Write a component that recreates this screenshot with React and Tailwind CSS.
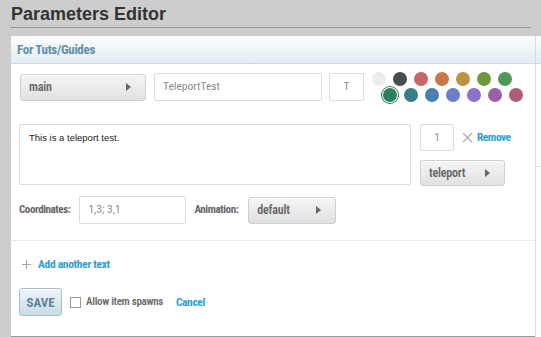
import React from 'react';

const COND = "font-['Roboto_Condensed','Open_Sans_Condensed',sans-serif]";

const ROW1 = ['bg-[#ececec]', 'bg-[#4a4d50]', 'bg-[#c6636b]', 'bg-[#c57a45]', 'bg-[#bf9242]', 'bg-[#6e983f]', 'bg-[#4e985a]'];
const ROW2 = ['bg-[#2f7d5f]', 'bg-[#3a7c88]', 'bg-[#4a80b0]', 'bg-[#6c7fc6]', 'bg-[#8a73c3]', 'bg-[#9a61a8]', 'bg-[#b05b79]'];

function Caret() {
  return (
    <svg width="5" height="8" viewBox="0 0 5 8" className="shrink-0">
      <path d="M0 0 L5 4 L0 8 Z" fill="#666" />
    </svg>
  );
}

function Select({ label, className }) {
  return (
    <div
      className={`flex items-center justify-between rounded-[3px] border border-[#d0d0d0] bg-gradient-to-b from-[#f5f5f5] to-[#e1e1e1] pl-[8px] pr-[14px] text-[12px] font-semibold tracking-[-0.2px] text-[#666] shadow-[inset_0_1px_0_#fff] ${COND} ${className}`}
    >
      <span>{label}</span>
      <Caret />
    </div>
  );
}

function Field({ value, className }) {
  return (
    <div className={`flex items-center rounded-[2px] border border-[#dcdcdc] bg-white text-[11.5px] text-[#8a8a8a] ${COND} ${className}`}>
      {value}
    </div>
  );
}

export default function App() {
  return (
    <div className="h-[337px] w-[541px] overflow-hidden bg-[#cdcdcd]">
      <div className="mx-[10px] h-[28px] border-b border-[#9b9b9b] pl-[1px] pt-[4px]">
        <h1 className="font-['Liberation_Sans',Arial,sans-serif] text-[18px] font-bold leading-[20px] text-[#333]">
          Parameters Editor
        </h1>
      </div>

      <div className="mt-[8px] flex h-[301px]">
        <div className="ml-[11px] flex w-[524px] flex-col border-b border-[#999] bg-white">
          <div className="flex h-[28px] items-center border-b border-[#cddbe4] bg-gradient-to-b from-[#fcfdfe] to-[#e2ecf2] pl-[6px]">
            <span className={`text-[13px] font-bold tracking-[-0.3px] text-[#5f8fa9] ${COND}`}>For Tuts/Guides</span>
          </div>

          <div className="flex flex-col pl-[8px] pt-[8px]">
            <div className="flex items-center">
              <Select label="main" className="ml-[1px] h-[27px] w-[126px]" />
              <Field value="TeleportTest" className="ml-[8px] h-[28px] w-[168px] pl-[8px]" />
              <Field value="T" className="ml-[7px] h-[28px] w-[35px] justify-center" />
              <div className="ml-[8px] flex flex-col gap-[2px]">
                <div className="flex gap-[7px]">
                  {ROW1.map((c) => (
                    <span key={c} className={`h-[14px] w-[14px] rounded-full ${c}`} />
                  ))}
                </div>
                <div className="ml-[11px] flex gap-[7px]">
                  {ROW2.map((c, i) => (
                    <span
                      key={c}
                      className={`h-[14px] w-[14px] rounded-full ${c} ${i === 0 ? 'ring-1 ring-[#2f7d5f] ring-offset-1' : ''}`}
                    />
                  ))}
                </div>
              </div>
            </div>

            <div className="mt-[22px] flex">
              <div className="h-[61px] w-[392px] rounded-[2px] border border-[#dcdcdc] px-[9px] pt-[6px] font-['Liberation_Sans',Arial,sans-serif] text-[9.5px] text-[#222]">
                This is a teleport test.
              </div>
              <div className="ml-[9px] flex flex-col">
                <div className="flex items-center">
                  <Field value="1" className="h-[27px] w-[34px] justify-center" />
                  <svg width="11" height="11" viewBox="0 0 11 11" className="ml-[8px]">
                    <path d="M1 1 L10 10 M10 1 L1 10" stroke="#b5b5b5" strokeWidth="1.5" />
                  </svg>
                  <span className={`ml-[4px] text-[11.5px] font-bold tracking-[-0.5px] text-[#2aa0d5] ${COND}`}>Remove</span>
                </div>
                <Select label="teleport" className="mt-[9px] h-[26px] w-[85px]" />
              </div>
            </div>

            <div className="mt-[10px] flex items-center">
              <span className={`text-[11px] font-bold tracking-[-0.4px] text-[#666] ${COND}`}>Coordinates:</span>
              <Field value="1,3; 3,1" className="ml-[9px] h-[28px] w-[107px] pl-[8px]" />
              <span className={`ml-[8px] text-[11px] font-bold tracking-[-0.4px] text-[#666] ${COND}`}>Animation:</span>
              <Select label="default" className="ml-[10px] h-[27px] w-[88px]" />
            </div>
          </div>

          <div className="mt-[16px] border-t border-[#ececec]" />

          <div className="ml-[11px] mt-[15px] flex items-center">
            <svg width="9" height="9" viewBox="0 0 9 9">
              <path d="M4.5 0 V9 M0 4.5 H9" stroke="#aaa" strokeWidth="1.2" />
            </svg>
            <span className={`ml-[7px] text-[11.5px] font-bold tracking-[-0.3px] text-[#2aa0d5] ${COND}`}>Add another text</span>
          </div>

          <div className="ml-[8px] mt-[15px] flex items-center">
            <div
              className={`flex h-[28px] w-[43px] items-center justify-center rounded-[3px] border border-[#a7bfcc] bg-gradient-to-b from-[#eef5f9] to-[#c9dce6] text-[13px] font-bold text-[#5d8399] shadow-[inset_0_1px_0_#fff] ${COND}`}
            >
              SAVE
            </div>
            <span className="ml-[8px] h-[11px] w-[11px] border border-[#9a9a9a] bg-white" />
            <span className={`ml-[5px] text-[11px] font-semibold tracking-[-0.3px] text-[#6a6a6a] ${COND}`}>Allow item spawns</span>
            <span className={`ml-[13px] text-[11.5px] font-bold tracking-[-0.4px] text-[#2aa0d5] ${COND}`}>Cancel</span>
          </div>
        </div>

        <div className="flex flex-1 flex-col border-l border-[#cfdde6] bg-white">
          <div className="h-[28px] border-b border-[#cddbe4] bg-gradient-to-b from-[#fcfdfe] to-[#e2ecf2]" />
          <div className="mt-[102px] border-t border-[#e4e4e4]" />
        </div>
      </div>
    </div>
  );
}
